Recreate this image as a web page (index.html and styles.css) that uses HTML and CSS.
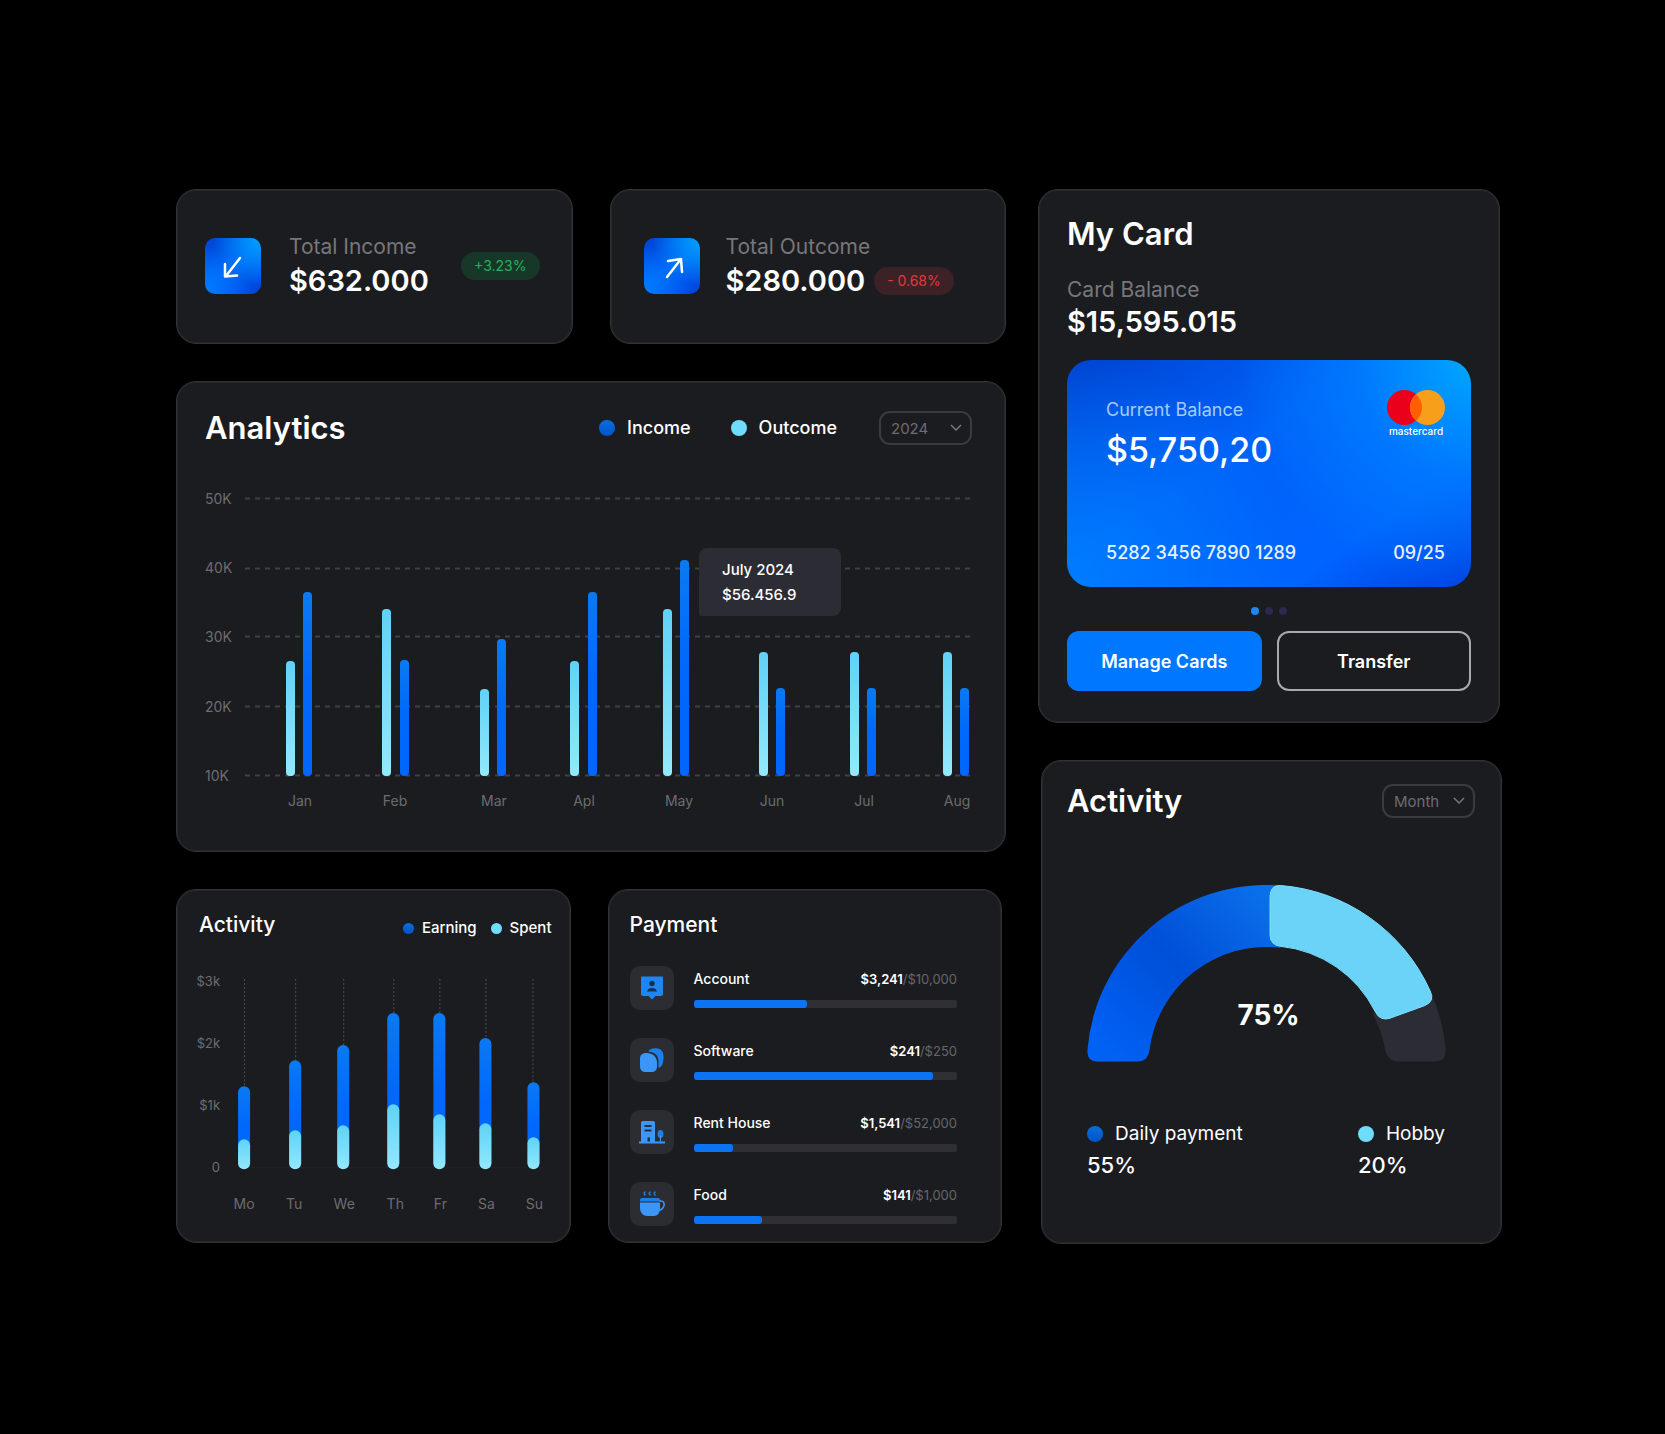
FILE: index.html
```html
<!DOCTYPE html>
<html lang="en">
<head>
  <meta charset="UTF-8">
  <meta name="viewport" content="width=device-width, initial-scale=1.0">
  <title>Finance Dashboard</title>
  <link rel="stylesheet" href="styles.css">
</head>
<body>

<main class="dashboard">
  <div class="main-column">

    <div class="stats">
      <section class="card stat">
        <div class="stat-icon">
          <svg width="56" height="56" viewBox="0 0 56 56"><path d="M35 20 21 38M20 26v12.500l12-1" /></svg>
        </div>
        <div>
          <p class="label">Total Income</p>
          <p class="amount">$632.000</p>
        </div>
        <span class="badge badge-up">+3.23%</span>
      </section>

      <section class="card stat stat-outcome">
        <div class="stat-icon">
          <svg width="56" height="56" viewBox="0 0 56 56"><path d="M23 39 37 21M24 23l13-2 1 13" /></svg>
        </div>
        <div>
          <p class="label">Total Outcome</p>
          <div class="amount-row">
            <p class="amount">$280.000</p>
            <span class="badge badge-down">- 0.68%</span>
          </div>
        </div>
      </section>
    </div>

    <section class="card analytics">
      <div class="card-header">
        <h2>Analytics</h2>
        <ul class="legend">
          <li><span class="dot dot-blue"></span>Income</li>
          <li><span class="dot dot-cyan"></span>Outcome</li>
        </ul>
        <div class="select">
          <select aria-label="Year">
            <option>2024</option>
            <option>2023</option>
          </select>
          <svg width="12" height="8" viewBox="0 0 12 8"><path d="M1 1l5 5 5-5" /></svg>
        </div>
      </div>

      <svg class="chart" viewBox="0 0 767 335">
        <defs>
          <linearGradient id="blueBar" x1="0" y1="0" x2="0" y2="1">
            <stop offset="0" stop-color="#0a7af2" />
            <stop offset="0.5" stop-color="#0068fb" />
            <stop offset="1" stop-color="#0066ff" />
          </linearGradient>
          <linearGradient id="cyanBar" x1="0" y1="0" x2="0" y2="1">
            <stop offset="0" stop-color="#5fd2f7" />
            <stop offset="1" stop-color="#93e9fc" />
          </linearGradient>
        </defs>
        <g class="grid-line">
          <path d="M40 18.500H767" />
          <path d="M40 88.500H767" />
          <path d="M40 156.500H767" />
          <path d="M40 226.500H767" />
          <path d="M40 295.500H767" />
        </g>
        <g class="axis">
          <text x="0" y="24">50K</text>
          <text x="0" y="93">40K</text>
          <text x="0" y="162">30K</text>
          <text x="0" y="232">20K</text>
          <text x="0" y="301">10K</text>
        </g>
        <g fill="url(#cyanBar)">
          <rect x="81" y="181" width="9" height="115" rx="4" />
          <rect x="177" y="129" width="9" height="167" rx="4" />
          <rect x="275" y="209" width="9" height="87" rx="4" />
          <rect x="365" y="181" width="9" height="115" rx="4" />
          <rect x="458" y="129" width="9" height="167" rx="4" />
          <rect x="554" y="172" width="9" height="124" rx="4" />
          <rect x="645" y="172" width="9" height="124" rx="4" />
          <rect x="738" y="172" width="9" height="124" rx="4" />
        </g>
        <g fill="url(#blueBar)">
          <rect x="98" y="112" width="9" height="184" rx="4" />
          <rect x="195" y="180" width="9" height="116" rx="4" />
          <rect x="292" y="159" width="9" height="137" rx="4" />
          <rect x="383" y="112" width="9" height="184" rx="4" />
          <rect x="475" y="80" width="9" height="216" rx="4" />
          <rect x="571" y="208" width="9" height="88" rx="4" />
          <rect x="662" y="208" width="9" height="88" rx="4" />
          <rect x="755" y="208" width="9" height="88" rx="4" />
        </g>
        <g class="axis axis-middle">
          <text x="95" y="326">Jan</text>
          <text x="190" y="326">Feb</text>
          <text x="289" y="326">Mar</text>
          <text x="379" y="326">Apl</text>
          <text x="474" y="326">May</text>
          <text x="567" y="326">Jun</text>
          <text x="659" y="326">Jul</text>
          <text x="752" y="326">Aug</text>
        </g>
        <g class="tooltip">
          <path d="M502 68h126a8 8 0 0 1 8 8v52a8 8 0 0 1-8 8h-132a2 2 0 0 1-2-2v-58a8 8 0 0 1 8-8z" />
          <text x="517" y="95">July 2024</text>
          <text x="517" y="120">$56.456.9</text>
        </g>
      </svg>
    </section>

    <div class="bottom-row">
      <section class="card week">
        <div class="card-header">
          <h3>Activity</h3>
          <ul class="legend legend-small">
            <li><span class="dot dot-blue"></span>Earning</li>
            <li><span class="dot dot-cyan"></span>Spent</li>
          </ul>
        </div>

        <svg class="chart" viewBox="0 -10 356 250">
          <g class="drop-line">
            <path d="M49.500 4V114" />
            <path d="M100.500 4V88" />
            <path d="M148.500 4V72" />
            <path d="M198.500 4V40" />
            <path d="M244.500 4V40" />
            <path d="M290.500 4V66" />
            <path d="M337.500 4V109" />
          </g>
          <path class="base-line" d="M56 192.500H350" />
          <g class="axis axis-end">
            <text x="25" y="11">$3k</text>
            <text x="25" y="73">$2k</text>
            <text x="25" y="135">$1k</text>
            <text x="25" y="197">0</text>
          </g>
          <g fill="url(#blueBar)">
            <rect x="43" y="111" width="12" height="82" rx="6" />
            <rect x="94" y="85" width="12" height="108" rx="6" />
            <rect x="142" y="70" width="12" height="123" rx="6" />
            <rect x="192" y="38" width="12" height="155" rx="6" />
            <rect x="238" y="38" width="12" height="155" rx="6" />
            <rect x="284" y="63" width="12" height="130" rx="6" />
            <rect x="332" y="107" width="12" height="86" rx="6" />
          </g>
          <g fill="url(#cyanBar)">
            <rect x="43" y="164" width="12" height="30" rx="6" />
            <rect x="94" y="155" width="12" height="39" rx="6" />
            <rect x="142" y="150" width="12" height="44" rx="6" />
            <rect x="192" y="129" width="12" height="65" rx="6" />
            <rect x="238" y="139" width="12" height="55" rx="6" />
            <rect x="284" y="148" width="12" height="46" rx="6" />
            <rect x="332" y="162" width="12" height="32" rx="6" />
          </g>
          <g class="axis axis-middle">
            <text x="49" y="234">Mo</text>
            <text x="99" y="234">Tu</text>
            <text x="149" y="234">We</text>
            <text x="200" y="234">Th</text>
            <text x="245" y="234">Fr</text>
            <text x="291" y="234">Sa</text>
            <text x="339" y="234">Su</text>
          </g>
        </svg>
      </section>

      <section class="card payment">
        <h3>Payment</h3>
        <ul class="payments">
          <li>
            <span class="payment-icon">
              <svg width="26" height="26" viewBox="0 0 26 26">
                <path fill="#1d86f5" d="M3 1.500h20a1 1 0 0 1 1 1V19a2 2 0 0 1-2 2h-5.500L13 24.500 9.500 21H4a2 2 0 0 1-2-2V2.500a1 1 0 0 1 1-1z" />
                <circle cx="13" cy="8.500" r="2.700" fill="#16304f" />
                <path fill="#16304f" d="M8 16.500c.5-2.500 2.500-3.500 5-3.500s4.500 1 5 3.500z" />
              </svg>
            </span>
            <div class="payment-info">
              <div class="payment-text"><span>Account</span><span class="limit"><b>$3,241</b>/$10,000</span></div>
              <div class="progress"><div class="progress-fill" style="width: 43%"></div></div>
            </div>
          </li>
          <li>
            <span class="payment-icon">
              <svg width="26" height="26" viewBox="0 0 26 26">
                <path fill="#1d7fe8" d="M9 4.500c2-3 6-4 10-3 4 1 5.500 4 5.500 8 0 6-1 10-5 11.500V14.500c0-6-3.500-9.500-10.500-10z" />
                <path fill="#3b96f8" d="M1 12c0-4 2-6 6.500-6C13.500 6 18 9.500 18 16v3c0 4-2 6-6 6H7c-4 0-6-2-6-6z" />
              </svg>
            </span>
            <div class="payment-info">
              <div class="payment-text"><span>Software</span><span class="limit"><b>$241</b>/$250</span></div>
              <div class="progress"><div class="progress-fill" style="width: 91%"></div></div>
            </div>
          </li>
          <li>
            <span class="payment-icon">
              <svg width="26" height="26" viewBox="0 0 26 26">
                <path fill="#3b96f8" fill-rule="evenodd" d="M2 3.500Q2 2 3.500 2h11Q16 2 16 3.500V23h-5v-4.500H8.500V23H2zM5.500 6v2h7V6zm0 4.500v2h7v-2z" />
                <ellipse cx="21.500" cy="15" rx="3" ry="4" fill="#1d7fe8" />
                <path fill="#3b96f8" d="M21 17h1v6h-1zM0 22.500h26v2H0z" />
              </svg>
            </span>
            <div class="payment-info">
              <div class="payment-text"><span>Rent House</span><span class="limit"><b>$1,541</b>/$52,000</span></div>
              <div class="progress"><div class="progress-fill" style="width: 15%"></div></div>
            </div>
          </li>
          <li>
            <span class="payment-icon">
              <svg width="26" height="26" viewBox="0 0 26 26">
                <path fill="none" stroke="#1d7fe8" stroke-width="1.500" stroke-linecap="round" d="M6 1q-1.500 1.500 0 3M11 1q-1.500 1.500 0 3M16 1q-1.500 1.500 0 3" />
                <path fill="none" stroke="#3b96f8" stroke-width="1.500" d="M20 10h2c2.500 0 3.500 2 3 4.500S23 19 19 19.500" />
                <path fill="#1d7fe8" d="M3 7h16q2 0 2 2v1.500H1V9q0-2 2-2z" />
                <path fill="#3b96f8" d="M1 11.500h20V17c0 5-2.500 8-6 8H8c-3.500 0-7-3-7-8z" />
              </svg>
            </span>
            <div class="payment-info">
              <div class="payment-text"><span>Food</span><span class="limit"><b>$141</b>/$1,000</span></div>
              <div class="progress"><div class="progress-fill" style="width: 26%"></div></div>
            </div>
          </li>
        </ul>
      </section>
    </div>
  </div>

  <div class="side-column">
    <section class="card my-card">
      <h2>My Card</h2>
      <p class="label">Card Balance</p>
      <p class="amount">$15,595.015</p>

      <div class="bank-card">
        <div class="bank-top">
          <div class="bank-balance">
            <p class="bank-label">Current Balance</p>
            <p class="bank-amount">$5,750,20</p>
          </div>
          <svg width="58" height="48" viewBox="0 0 58 48">
            <circle cx="17.500" cy="17.500" r="17.500" fill="#eb001b" />
            <circle cx="40.500" cy="17.500" r="17.500" fill="#f79e1b" />
            <path fill="#ff5f00" d="M29 4.300a17.500 17.500 0 0 1 0 26.400 17.500 17.500 0 0 1 0-26.400z" />
            <text x="29" y="45" class="bank-brand">mastercard</text>
          </svg>
        </div>
        <div class="bank-bottom">
          <span>5282 3456 7890 1289</span>
          <span>09/25</span>
        </div>
      </div>

      <div class="pager">
        <span class="active"></span>
        <span></span>
        <span></span>
      </div>

      <div class="actions">
        <button type="button" class="btn btn-primary">Manage Cards</button>
        <button type="button" class="btn btn-outline">Transfer</button>
      </div>
    </section>

    <section class="card activity">
      <div class="card-header">
        <h2>Activity</h2>
        <div class="select">
          <select aria-label="Period">
            <option>Month</option>
            <option>Week</option>
          </select>
          <svg width="12" height="8" viewBox="0 0 12 8"><path d="M1 1l5 5 5-5" /></svg>
        </div>
      </div>

      <svg class="gauge" viewBox="-180 -180 360 177">
        <defs>
          <linearGradient id="gaugeBlue" gradientUnits="userSpaceOnUse" x1="-150" y1="0" x2="10" y2="-160">
            <stop offset="0" stop-color="#0062f5" />
            <stop offset="0.5" stop-color="#004fd8" />
            <stop offset="1" stop-color="#0a70ea" />
          </linearGradient>
        </defs>
        <path fill="#2c2c35" d="M165.100 -71.800A180 180 0 0 1 179.600 -14Q180 -3 169 -3H132Q122 -3 119 -14A118 118 0 0 0 106.500 -50.800Z" />
        <path fill="url(#gaugeBlue)" d="M-170 -3Q-180 -3 -179.600 -14A180 180 0 0 1 14 -179.500V-117A118 118 0 0 0 -117.400 -14Q-119 -3 -129 -3Z" />
        <path class="gauge-cyan" d="M14 -179.500A180 180 0 0 1 164 -74Q169.500 -63.500 158.500 -59L124 -46.500Q114 -43 109 -53A120 120 0 0 0 14 -118.500Q3.500 -120 3.500 -130V-168Q3.500 -180 14 -179.500Z" />
        <text x="2" y="-40">75%</text>
      </svg>

      <div class="gauge-legend">
        <div>
          <p><span class="dot dot-blue"></span>Daily payment</p>
          <strong>55%</strong>
        </div>
        <div>
          <p><span class="dot dot-cyan"></span>Hobby</p>
          <strong>20%</strong>
        </div>
      </div>
    </section>
  </div>
</main>

</body>
</html>
```

FILE: styles.css
```css
* {
  box-sizing: border-box;
}

body {
  margin: 0;
  background-color: #000;
  color: #fff;
  font-family: Inter, 'Open Sans', sans-serif;
  font-size: 15px;
}

h2,
h3,
p,
ul {
  margin: 0;
  padding: 0;
}

ul {
  list-style: none;
}

svg {
  display: block;
}

h2 {
  font-size: 31px;
  line-height: 36px;
  font-weight: 600;
}

h3 {
  font-size: 21px;
  line-height: 24px;
  font-weight: 500;
}

.label {
  font-size: 21px;
  line-height: 28px;
  color: #77777b;
}

.amount {
  font-size: 29px;
  line-height: 36px;
  font-weight: 600;
}

/* layout */

.dashboard {
  display: grid;
  grid-template-columns: 830fr 464fr;
  align-items: start;
  gap: 32px;
  padding: 189px 163px 189px 176px;
}

.main-column,
.side-column {
  display: flex;
  flex-direction: column;
  gap: 37px;
}

.stats,
.bottom-row {
  display: grid;
  grid-template-columns: minmax(0, 1fr) minmax(0, 1fr);
  gap: 37px;
}

.bottom-row {
  padding-right: 4px;
}

.card {
  background-color: #1b1c20;
  border: 1px solid #323236;
  border-radius: 20px;
  box-shadow: inset 0 0 0 1px #27272b;
}

.card-header {
  display: flex;
  align-items: center;
}

/* income / outcome */

.stat {
  display: flex;
  align-items: center;
  gap: 28px;
  padding: 43px 32px 44px 28px;
}

.stat .label {
  margin-bottom: 2px;
}

.stat-outcome {
  padding-left: 33px;
  gap: 26px;
}

.stat-icon {
  border-radius: 10px;
  background:
    radial-gradient(circle at 100% 0%, #00a2ff 0%, rgba(0, 110, 255, 0) 60%),
    radial-gradient(circle at 0% 100%, #007dff 0%, rgba(0, 112, 255, 0) 60%),
    linear-gradient(145deg, #0042d0 0%, #0062f8 50%, #0042d8 100%);
}

.stat-icon path {
  fill: none;
  stroke: #fff;
  stroke-width: 2.5;
  stroke-linecap: round;
  stroke-linejoin: round;
}

.amount-row {
  display: flex;
  align-items: center;
  gap: 9px;
}

.badge {
  padding: 0 13px;
  border-radius: 14px;
  font-size: 14px;
  line-height: 28px;
  white-space: nowrap;
}

.badge-up {
  margin-left: auto;
  background-color: #173728;
  color: #22b35c;
}

.badge-down {
  background-color: #3c2226;
  color: #e0393e;
}

/* legends and selects */

.legend {
  display: flex;
  gap: 40px;
  margin-left: auto;
  font-size: 18px;
  line-height: 24px;
  font-weight: 500;
}

.legend li {
  display: flex;
  align-items: center;
  gap: 12px;
}

.dot {
  width: 16px;
  height: 16px;
  border-radius: 50%;
}

.dot-blue {
  background: linear-gradient(#0a6ee0, #0052c8);
}

.dot-cyan {
  background-color: #6fdcfb;
}

.legend-small {
  gap: 14px;
  font-size: 15px;
}

.legend-small li {
  gap: 8px;
}

.legend-small .dot {
  width: 11px;
  height: 11px;
}

.select {
  display: grid;
  align-items: center;
  width: 93px;
}

.select select,
.select svg {
  grid-area: 1 / 1;
}

.select select {
  appearance: none;
  height: 34px;
  padding: 0 10px;
  border: 2px solid #3a3a3f;
  border-radius: 11px;
  background-color: transparent;
  color: #6c6c70;
  font-family: inherit;
  font-size: 15px;
}

.select svg {
  justify-self: end;
  margin-right: 10px;
  fill: none;
  stroke: #77777b;
  stroke-width: 1.5;
  pointer-events: none;
}

/* charts */

.chart {
  width: 100%;
}

.axis {
  fill: #6c6c70;
  font-size: 14px;
}

.axis-middle {
  text-anchor: middle;
}

.axis-end {
  font-size: 13px;
  text-anchor: end;
}

.grid-line {
  stroke: #404045;
  stroke-width: 2;
  stroke-dasharray: 5 5;
}

.drop-line {
  stroke: #4b4b50;
  stroke-dasharray: 2 2;
}

.base-line {
  stroke: #232328;
}

.tooltip path {
  fill: #2c2c35;
}

.tooltip text {
  fill: #fff;
  font-size: 15px;
  font-weight: 500;
}

.analytics {
  padding: 28px 33px 36px 28px;
}

.analytics .select {
  margin-left: 42px;
}

.analytics .chart {
  margin-top: 34px;
}

.week {
  padding: 23px 18px 27px;
}

.week .card-header {
  align-items: flex-start;
  padding-left: 4px;
}

.week .legend {
  padding-top: 3px;
}

.week .chart {
  margin-top: 25px;
}

/* payment */

.payment {
  padding: 23px 44px 16px 21px;
}

.payments {
  display: flex;
  flex-direction: column;
  gap: 28px;
  margin-top: 29px;
}

.payments li {
  display: flex;
  gap: 20px;
}

.payment-icon {
  display: grid;
  place-items: center;
  width: 44px;
  height: 44px;
  border-radius: 10px;
  background-color: #2c2c33;
}

.payment-info {
  display: flex;
  flex: 1;
  flex-direction: column;
  justify-content: space-between;
  padding: 3px 0 2px;
}

.payment-text {
  display: flex;
  justify-content: space-between;
  font-size: 14px;
  line-height: 20px;
  font-weight: 500;
}

.limit {
  color: #66666b;
  font-size: 13px;
  font-weight: 400;
}

.limit b {
  color: #fff;
  font-weight: 600;
}

.progress {
  height: 8px;
  border-radius: 2px;
  background-color: #2f2f34;
}

.progress-fill {
  height: 8px;
  border-radius: 3px;
  background-color: #0a74f2;
}

/* my card */

.my-card {
  margin-right: 2px;
  padding: 26px 28px 31px;
}

.my-card .label {
  margin-top: 24px;
}

.bank-card {
  margin-top: 20px;
  padding: 30px 26px 22px 39px;
  border-radius: 24px;
  background:
    radial-gradient(circle at 100% 0%, #00a6ff 0%, rgba(0, 128, 255, 0.7) 25%, rgba(0, 100, 255, 0) 50%),
    radial-gradient(circle at 0% 100%, #007dff 0%, rgba(0, 112, 255, 0) 50%),
    linear-gradient(145deg, #0042d0 0%, #0062f8 40%, #0064ff 75%, #0042e2 100%);
}

.bank-top,
.bank-bottom {
  display: flex;
  justify-content: space-between;
}

.bank-balance {
  padding-top: 8px;
}

.bank-label {
  font-size: 18px;
  line-height: 24px;
  color: #a3cbff;
}

.bank-amount {
  margin-top: 6px;
  font-size: 34px;
  line-height: 44px;
  font-weight: 500;
}

.bank-brand {
  fill: #fff;
  font-size: 10px;
  font-weight: 500;
  text-anchor: middle;
}

.bank-bottom {
  margin-top: 69px;
  font-size: 18px;
  line-height: 24px;
  font-weight: 500;
  color: #e6f1ff;
}

.pager {
  display: flex;
  justify-content: center;
  gap: 6px;
  margin: 20px 0 16px;
}

.pager span {
  width: 8px;
  height: 8px;
  border-radius: 50%;
  background-color: #2b2850;
}

.pager .active {
  background-color: #1e88f0;
}

.actions {
  display: grid;
  grid-template-columns: 1fr 1fr;
  gap: 15px;
}

.btn {
  height: 60px;
  border: 2px solid #0077ff;
  border-radius: 12px;
  color: #fff;
  font-family: inherit;
  font-size: 18px;
  font-weight: 600;
  cursor: pointer;
}

.btn-primary {
  background-color: #0077ff;
}

.btn-outline {
  border-color: #a9a9ac;
  background-color: transparent;
}

/* activity gauge */

.activity {
  margin-left: 3px;
  padding: 22px 26px 63px 25px;
}

.activity .card-header {
  justify-content: space-between;
}

.gauge {
  width: 88%;
  margin: 66px auto 0 20px;
}

.gauge-cyan {
  fill: #6bd2f8;
  stroke: #7be0fa;
}

.gauge text {
  fill: #fff;
  font-size: 28px;
  font-weight: 700;
  text-anchor: middle;
}

.gauge-legend {
  display: flex;
  justify-content: space-between;
  margin-top: 58px;
  padding: 0 30px 0 20px;
}

.gauge-legend p {
  display: flex;
  align-items: center;
  gap: 12px;
  font-size: 19px;
  line-height: 28px;
}

.gauge-legend strong {
  display: block;
  margin-top: 2px;
  font-size: 22px;
  line-height: 30px;
  font-weight: 500;
}
```
